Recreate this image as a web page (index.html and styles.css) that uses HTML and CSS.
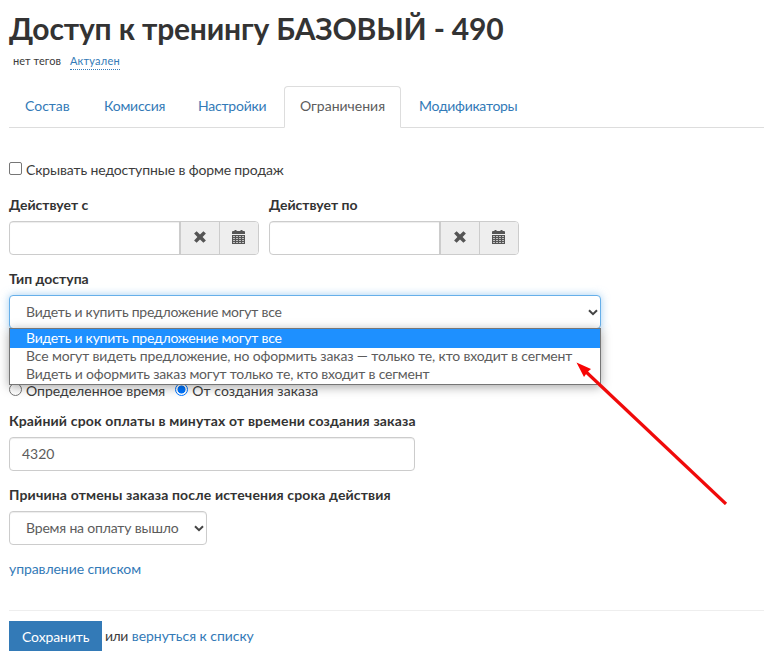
FILE: index.html
```html
<!DOCTYPE html>
<html lang="ru">
<head>
<meta charset="utf-8">
<title>Доступ к тренингу БАЗОВЫЙ - 490</title>
<link rel="stylesheet" href="styles.css">
</head>
<body>
<svg class="symbols" aria-hidden="true">
  <symbol id="remove" viewBox="0 0 14 14">
    <path d="M3.6 1.2 7 4.4l3.4-3.2 2.5 2.4L9.6 7l3.3 3.4-2.5 2.4L7 9.6l-3.4 3.2-2.5-2.4L4.4 7 1.1 3.6z"/>
  </symbol>
  <symbol id="calendar" viewBox="0 0 14 14">
    <path d="M1 1h1.500V0h2v1h4V0h2v1H12a1 1 0 0 1 1 1v2H0V2a1 1 0 0 1 1-1z"/>
    <path fill-rule="evenodd" d="M0 5h13v9H0zM1 6v1h2V6zM4 6v1h2V6zM7 6v1h2V6zM10 6v1h2V6zM1 8v1h2V8zM4 8v1h2V8zM7 8v1h2V8zM10 8v1h2V8zM1 10v1h2v-1zM4 10v1h2v-1zM7 10v1h2v-1zM10 10v1h2v-1zM1 12v1h2v-1zM4 12v1h2v-1zM7 12v1h2v-1zM10 12v1h2v-1z"/>
    <path d="M0 5h13v9H0z" opacity=".3"/>
  </symbol>
  <symbol id="chevron" viewBox="0 0 10 7">
    <path d="M1 1.2 5 5.2 9 1.2" fill="none" stroke="currentColor" stroke-width="2"/>
  </symbol>
</svg>
<main class="page">
  <h1>Доступ к тренингу БАЗОВЫЙ - 490</h1>
  <div class="tags"><span class="no-tags">нет тегов</span><a class="status">Актуален</a></div>
  <nav class="tabs">
    <a class="tab tab-content">Состав</a>
    <a class="tab tab-commission">Комиссия</a>
    <a class="tab tab-settings">Настройки</a>
    <a class="tab tab-limits active">Ограничения</a>
    <a class="tab tab-modifiers">Модификаторы</a>
  </nav>
  <label class="check"><span class="box"></span><span class="check-text">Скрывать недоступные в форме продаж</span></label>
  <div class="dates">
    <div class="date">
      <label class="title">Действует с</label>
      <div class="group">
        <span class="date-input"></span>
        <span class="addon"><svg class="icon"><use href="#remove"/></svg></span>
        <span class="addon"><svg class="icon"><use href="#calendar"/></svg></span>
      </div>
    </div>
    <div class="date">
      <label class="title">Действует по</label>
      <div class="group">
        <span class="date-input"></span>
        <span class="addon"><svg class="icon"><use href="#remove"/></svg></span>
        <span class="addon"><svg class="icon"><use href="#calendar"/></svg></span>
      </div>
    </div>
  </div>
  <label class="title access-title">Тип доступа</label>
  <div class="access">
    <div class="control select focused"><span class="t-all">Видеть и купить предложение могут все</span><svg class="chevron"><use href="#chevron"/></svg></div>
    <div class="menu">
      <div class="option selected t-all">Видеть и купить предложение могут все</div>
      <div class="option t-see">Все могут видеть предложение, но оформить заказ — только те, кто входит в сегмент</div>
      <div class="option t-segment">Видеть и оформить заказ могут только те, кто входит в сегмент</div>
    </div>
    <svg class="arrow" viewBox="0 0 160 150">
      <path d="M14 14 157 149" stroke="#f00a0a" stroke-width="3.200"/>
      <path d="M7.500 7.500 22 14 18.500 17 15 22z" fill="#f80505"/>
    </svg>
  </div>
  <div class="radios">
    <label class="radio-label"><span class="radio"></span><span>Определенное время</span></label>
    <label class="radio-label"><span class="radio on"></span><span class="t-created">От создания заказа</span></label>
  </div>
  <label class="title wide">Крайний срок оплаты в минутах от времени создания заказа</label>
  <div class="control minutes">4320</div>
  <label class="title wide reason-title">Причина отмены заказа после истечения срока действия</label>
  <div class="control select reason"><span>Время на оплату вышло</span><svg class="chevron"><use href="#chevron"/></svg></div>
  <a class="manage">управление списком</a>
  <footer class="actions">
    <span class="save">Сохранить</span><span class="or">или</span><a class="back">вернуться к списку</a>
  </footer>
</main>
</body>
</html>
```
FILE: styles.css
```css
* { box-sizing: border-box; }
html { overflow: hidden; }
body {
  margin: 0;
  height: 651px;
  overflow: hidden;
  background: #fff;
  color: #3c3c3c;
  font: 14px/20px Lato, sans-serif;
  white-space: nowrap;
}
.symbols { display: none; }
.page { padding: 12px 0 0 9px; }
a { color: #337ab7; }
h1 { margin: 0; color: #333; font-size: 30px; line-height: 33px; font-weight: 700; letter-spacing: -0.16px; }
.tags { display: flex; gap: 9px; height: 20px; margin-top: 8px; padding: 1px 0 0 4px; font-size: 11px; line-height: 14px; }
.no-tags { letter-spacing: 0.06px; }
.status { height: 16px; border-bottom: 1px dotted #337ab7; letter-spacing: 0.22px; }

.tabs { display: flex; gap: 2px; height: 42px; margin-top: 13px; border-bottom: 1px solid #ddd; }
.tab { height: 42px; padding: 9px 15px; border: 1px solid transparent; border-radius: 4px 4px 0 0; }
.tab.active { background: #fff; border-color: #ddd #ddd #fff; color: #5c5c5c; }
.tab-content { width: 77px; }
.tab-commission { width: 92px; letter-spacing: -0.2px; }
.tab-settings { width: 100px; letter-spacing: -0.22px; }
.tab-limits { width: 117px; }
.tab-modifiers { letter-spacing: -0.28px; }

.check { display: flex; gap: 4px; height: 20px; margin-top: 32px; }
.box { width: 13px; height: 13px; margin-top: 2px; border: 1px solid #767676; border-radius: 2px; }
.check-text { letter-spacing: -0.13px; }

.dates { display: flex; gap: 10px; margin-top: 15px; }
.title { display: block; height: 20px; color: #333; font-weight: 700; }
.title.wide { letter-spacing: 0.15px; }
.group { display: flex; width: 250px; height: 34px; margin-top: 6px; border: 1px solid #ccc; border-radius: 4px; overflow: hidden; }
.date-input { width: 170px; border-right: 1px solid #ccc; box-shadow: inset 0 1px 1px rgba(0,0,0,.075); }
.addon { display: flex; flex: 1; align-items: center; justify-content: center; padding-bottom: 2px; border-left: 1px solid #ccc; background: #eee; color: #555; }
.icon { width: 14px; height: 14px; fill: currentColor; }

.access-title { margin-top: 14px; }
.access { position: relative; width: 592px; height: 34px; margin-top: 6px; }
.control { display: flex; align-items: center; height: 34px; padding: 0 12px; border: 1px solid #ccc; border-radius: 4px; background: #fff; box-shadow: inset 0 1px 1px rgba(0,0,0,.075); color: #5c5c5c; }
.select { justify-content: space-between; padding: 0 2px 0 16px; }
.focused { border-color: #66afe9; box-shadow: 0 0 8px rgba(102,175,233,.6); }
.chevron { width: 10px; height: 7px; color: #444; }
.menu { position: absolute; z-index: 1; top: 33px; left: 0; width: 592px; height: 57px; border: 1px solid #767676; background: #fff; box-shadow: 0 2px 10px rgba(0,0,0,.35); color: #5c5c5c; }
.option { height: 18px; padding-left: 16px; line-height: 18px; }
.selected { height: 19px; background: #1e90ff; color: #fff; }
.t-all { letter-spacing: -0.24px; }
.t-see { letter-spacing: -0.14px; }
.t-segment { letter-spacing: -0.19px; }
.t-created { letter-spacing: 0.05px; }
.option.t-see, .option.t-segment { line-height: 16px; }
.arrow { position: absolute; z-index: 2; left: 560px; top: 60px; width: 160px; height: 150px; }

.radios { display: flex; gap: 10px; margin-top: 52px; }
.radio-label { display: flex; gap: 4px; }
.radio { width: 13px; height: 13px; margin-top: 2px; border: 1px solid #767676; border-radius: 50%; }
.radio.on { border-color: #0075ff; background: radial-gradient(circle, #0075ff 0 3.700px, #fff 4.300px); }
.radios + .title { margin-top: 10px; }
.minutes { width: 406px; margin-top: 6px; }
.reason-title { margin-top: 14px; }
.reason { width: 198px; margin-top: 6px; letter-spacing: -0.18px; }
.manage { display: block; margin-top: 14px; letter-spacing: -0.08px; }
.actions { display: flex; margin-top: 31px; padding-top: 10px; border-top: 1px solid #eee; }
.save { width: 93px; height: 34px; padding: 6px 13px; background: #337ab7; color: #fff; letter-spacing: -0.1px; }
.or { margin: 5px 4px 0 3px; letter-spacing: -0.5px; }
.back { margin-top: 5px; letter-spacing: -0.05px; }
```
